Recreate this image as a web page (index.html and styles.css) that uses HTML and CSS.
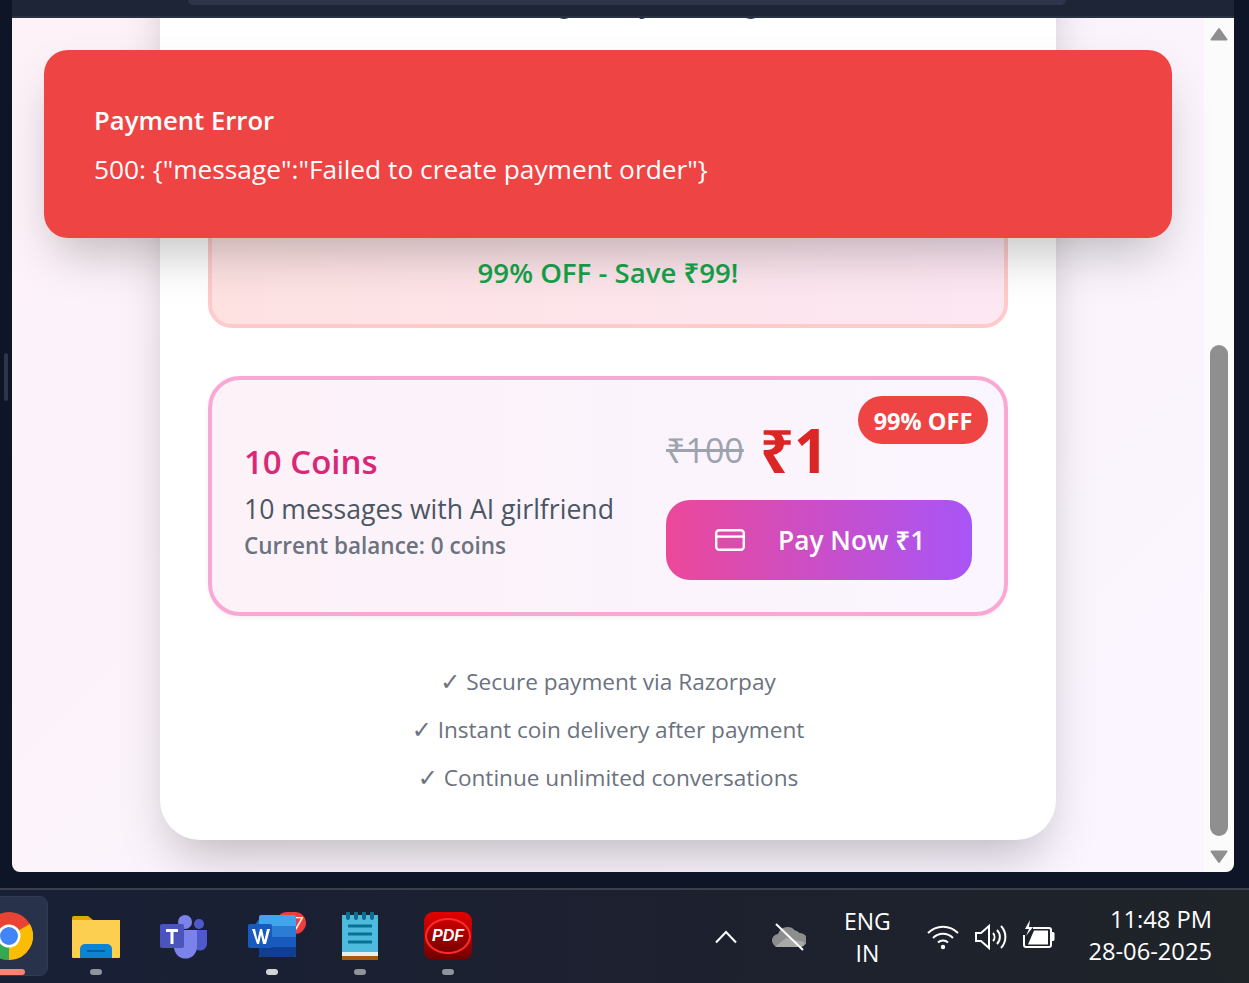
FILE: index.html
```html
<!DOCTYPE html>
<html lang="en">
<head>
<meta charset="UTF-8">
<meta name="viewport" content="width=device-width, initial-scale=1.0">
<title>Buy Coins</title>
<link rel="stylesheet" href="styles.css">
</head>
<body>
<div class="screen">
  <div class="resize-handle"></div>
  <div class="browser-bar"><div class="address-bar"></div></div>

  <div class="window">
    <main class="page">
      <section class="card">
        <h2 class="card-title">Love chatting today, darling</h2>
        <div class="offer-box">
          <p class="offer-text">99% OFF - Save ₹99!</p>
        </div>
        <div class="plan">
          <span class="plan-badge">99% OFF</span>
          <div class="plan-info">
            <h3 class="plan-name">10 Coins</h3>
            <p class="plan-desc">10 messages with AI girlfriend</p>
            <p class="plan-balance">Current balance: 0 coins</p>
          </div>
          <div class="plan-buy">
            <div class="plan-price">
              <span class="price-old">₹100</span>
              <span class="price-new">₹1</span>
            </div>
            <button class="pay-button" type="button">
              <svg class="pay-icon" viewBox="0 0 30 22" fill="none" stroke="currentColor" stroke-width="2.4">
                <rect x="1.2" y="1.2" width="27.6" height="19.6" rx="3"/>
                <path d="M1.2 7.6h27.6"/>
              </svg>
              <span>Pay Now ₹1</span>
            </button>
          </div>
        </div>
        <ul class="features">
          <li><span class="check">✓</span> Secure payment via Razorpay</li>
          <li><span class="check">✓</span> Instant coin delivery after payment</li>
          <li><span class="check">✓</span> Continue unlimited conversations</li>
        </ul>
      </section>
    </main>
    <div class="scrollbar">
      <svg class="scroll-arrow" viewBox="0 0 18 14"><path d="M9 2 L16.5 12.5 H1.5 Z" fill="#8f8f8f" stroke="#8f8f8f" stroke-width="2" stroke-linejoin="round"/></svg>
      <div class="scroll-track"><div class="scroll-thumb"></div></div>
      <svg class="scroll-arrow" viewBox="0 0 18 14"><path d="M9 12 L16.5 1.5 H1.5 Z" fill="#8f8f8f" stroke="#8f8f8f" stroke-width="2" stroke-linejoin="round"/></svg>
    </div>

    <div class="toast">
      <p class="toast-title">Payment Error</p>
      <p class="toast-text">500: {"message":"Failed to create payment order"}</p>
    </div>
  </div>

  <footer class="taskbar">
    <div class="task-apps">
      <div class="task-app task-app-active">
        <svg class="task-icon" viewBox="0 0 48 48">
          <circle cx="24" cy="24" r="24" fill="#ea4335"/>
          <path d="M24 24 L44.8 12 A24 24 0 0 1 24 48 Z" fill="#fbbc04"/>
          <path d="M24 24 L24 48 A24 24 0 0 1 3.2 12 Z" fill="#34a853"/>
          <circle cx="24" cy="24" r="11.5" fill="#fff"/>
          <circle cx="24" cy="24" r="9" fill="#4285f4"/>
        </svg>
        <span class="task-dot task-dot-alert"></span>
      </div>
      <div class="task-app">
        <svg class="task-icon" viewBox="0 0 48 48">
          <path d="M0 6a2 2 0 0 1 2-2h14l5 4v6H0z" fill="#e3a700"/>
          <path d="M0 8h48v37a1 1 0 0 1-1 1H1a1 1 0 0 1-1-1z" fill="#fdcf50"/>
          <path d="M8 46V37a5 5 0 0 1 5-5h22a5 5 0 0 1 5 5v9z" fill="#0c84d6"/>
          <path d="M15 39h18" stroke="#075c9e" stroke-width="2"/>
        </svg>
        <span class="task-dot"></span>
      </div>
      <div class="task-app">
        <svg class="task-icon" viewBox="0 0 48 48">
          <circle cx="39" cy="12" r="5" fill="#5059c9"/>
          <path d="M34 18h13v14a7 7 0 0 1-13 3z" fill="#5059c9"/>
          <circle cx="25" cy="10" r="7" fill="#7b83eb"/>
          <path d="M14 18h23v17a11 11 0 0 1-23 0z" fill="#7b83eb"/>
          <rect x="0" y="12" width="24" height="24" rx="2" fill="#4b53bc"/>
          <path d="M6 17h12v3h-4.500v12h-3V20H6z" fill="#fff"/>
        </svg>
        <span class="task-dot task-dot-hidden"></span>
      </div>
      <div class="task-app">
        <div class="word-wrap">
          <span class="word-badge">7</span>
          <svg class="task-icon word-icon" viewBox="0 0 48 48">
            <path d="M0 22 L12 6 V38 Z" fill="#1a6fc4"/>
            <rect x="11" y="3" width="37" height="42" rx="2" fill="#41a5ee"/>
            <rect x="11" y="14" width="37" height="11" fill="#2b7cd3"/>
            <rect x="11" y="25" width="37" height="10" fill="#185abd"/>
            <path d="M11 35h37v8a2 2 0 0 1-2 2H13a2 2 0 0 1-2-2z" fill="#103f91"/>
            <rect x="0" y="12" width="24" height="24" rx="2" fill="#185abd"/>
            <path d="M4 17h3l2.500 11L12 17h2l2.500 11L19 17h3l-4 15h-3l-2-9-2 9H9z" fill="#fff"/>
          </svg>
        </div>
        <span class="task-dot task-dot-open"></span>
      </div>
      <div class="task-app">
        <svg class="task-icon" viewBox="0 0 48 48">
          <rect x="6" y="3" width="36" height="37" fill="#4ebbdc"/>
          <rect x="6" y="40" width="36" height="4" fill="#e8eef0"/>
          <rect x="6" y="44" width="36" height="4" fill="#a8590f"/>
          <path d="M10 1v5M18 1v5M26 1v5M34 1v5" transform="translate(2 0)" stroke="#0c6d8c" stroke-width="4" stroke-linecap="round"/>
          <path d="M12 14h24M12 22h24M12 30h24" stroke="#0b6f93" stroke-width="3"/>
        </svg>
        <span class="task-dot"></span>
      </div>
      <div class="task-app">
        <div class="pdf-icon"><span class="pdf-ring">PDF</span></div>
        <span class="task-dot"></span>
      </div>
    </div>

    <div class="tray">
      <svg class="tray-chevron" viewBox="0 0 22 14" fill="none" stroke="#fff" stroke-width="2"><path d="M1 12.500 L11 2 L21 12.500"/></svg>
      <svg class="tray-cloud" viewBox="0 0 35 28">
        <path d="M8 24a6.500 6.500 0 0 1-1-13 10 10 0 0 1 17-3.500 7.500 7.500 0 0 1 4.500 2.500 7 7 0 0 1 1 14z" fill="#8d8d8d"/>
        <path d="M4 24 L15 15 L33 19 Q34 24 28 24z" fill="#a9a9a9"/>
        <path d="M5 1 L32 27" stroke="#fff" stroke-width="2"/>
      </svg>
      <div class="tray-lang"><span>ENG</span><span>IN</span></div>
      <div class="tray-status">
        <svg class="tray-icon" viewBox="0 0 32 26" fill="none" stroke="#fff" stroke-width="2">
          <path d="M1 9a21 21 0 0 1 30 0M6 14a14 14 0 0 1 20 0M11 18.500a7 7 0 0 1 10 0"/>
          <circle cx="16" cy="23" r="2.200" fill="#fff" stroke="none"/>
        </svg>
        <svg class="tray-icon" viewBox="0 0 32 26" fill="none" stroke="#fff" stroke-width="2">
          <path d="M1 9h5l8-7v22l-8-7H1z"/>
          <path d="M18 9a6 6 0 0 1 0 8M22 6a10 10 0 0 1 0 14M26 2a16 16 0 0 1 0 22"/>
        </svg>
        <svg class="tray-icon tray-battery" viewBox="0 0 32 28" fill="none" stroke="#fff" stroke-width="2">
          <path d="M10 8H26a2 2 0 0 1 2 2v15a2 2 0 0 1-2 2H3a2 2 0 0 1-2-2V15"/>
          <path d="M11 10.500h14v14H5z" fill="#fff" stroke="none"/>
          <path d="M28 12h2a1.500 1.500 0 0 1 1.500 1.500v6A1.500 1.500 0 0 1 30 21h-2z" fill="#fff" stroke="none"/>
          <path d="M7 0 L2 9 H6 L3 16 L10 7 H6 Z" fill="#fff" stroke="none"/>
        </svg>
      </div>
      <div class="tray-clock"><span>11:48 PM</span><span>28-06-2025</span></div>
    </div>
  </footer>
</div>
</body>
</html>
```

FILE: styles.css
```css
* {
    box-sizing: border-box;
}

html, body {
    margin: 0;
    padding: 0;
    height: 100%;
    overflow: hidden;
}

body {
    background-color: #0d1526;
    font-family: "Open Sans", "Noto Sans", sans-serif;
}

p, h2, h3, ul {
    margin: 0;
    padding: 0;
}

.screen {
    position: relative;
    height: 983px;
    display: flex;
    flex-direction: column;
}

.resize-handle {
    position: absolute;
    top: 353px;
    left: 4px;
    width: 4px;
    height: 48px;
    border-radius: 2px;
    background-color: #2e3449;
}

/* Browser bar, only the bottom edge is in view */
.browser-bar {
    position: relative;
    z-index: 1;
    height: 18px;
    background-color: #1e2536;
    border-bottom: 2px solid #2a3142;
    margin: 0 15px 0 12px;
    flex-shrink: 0;
}

.address-bar {
    height: 5px;
    margin: 0 168px 0 176px;
    background-color: #2e3449;
    border-radius: 0 0 8px 8px;
}

/* Page window */
.window {
    position: relative;
    height: 854px;
    margin: 0 15px 0 12px;
    display: flex;
    border-radius: 0 0 8px 8px;
    overflow: hidden;
    flex-shrink: 0;
}

.page {
    flex: 1;
    display: flex;
    justify-content: center;
    align-items: flex-end;
    padding-bottom: 32px;
    background: linear-gradient(135deg, #fdf2f8, #faf5ff);
}

.card {
    width: 896px;
    height: 1000px;
    flex-shrink: 0;
    display: flex;
    flex-direction: column;
    justify-content: flex-end;
    padding: 0 48px 38px;
    background-color: #fff;
    border-radius: 40px;
    box-shadow: 0 25px 50px -12px rgba(0,0,0,0.25);
}

.card-title {
    text-align: center;
    font-size: 27px;
    font-weight: 600;
    color: #374151;
    line-height: 40px;
    padding-right: 60px;
    margin-bottom: 166px;
}

.offer-box {
    height: 140px;
    display: flex;
    align-items: flex-end;
    justify-content: center;
    padding-bottom: 35px;
    border: 4px solid #fecaca;
    border-radius: 24px;
    background: linear-gradient(90deg, #fee2e2, #fce7f3);
    margin-bottom: 48px;
}

.offer-text {
    font-size: 27.6px;
    font-weight: 600;
    line-height: 34px;
    color: #16a34a;
}

.plan {
    position: relative;
    height: 240px;
    display: flex;
    justify-content: space-between;
    padding: 44px 32px 32px;
    border: 4px solid #f9a8d4;
    border-radius: 32px;
    background: linear-gradient(90deg, #fdf2f8, #faf5ff);
    box-shadow: 0 2px 5px rgba(0,0,0,0.06);
    margin-bottom: 42px;
}

.plan-badge {
    position: absolute;
    top: 16px;
    right: 16px;
    width: 130px;
    height: 48px;
    border-radius: 24px;
    background-color: #ef4444;
    color: #fff;
    font-size: 23.5px;
    font-weight: 700;
    line-height: 50px;
    text-align: center;
}

.plan-info {
    padding-top: 13px;
}

.plan-name {
    font-size: 33px;
    font-weight: 600;
    line-height: 50px;
    color: #db2777;
}

.plan-desc {
    margin-top: 1px;
    font-size: 26.6px;
    line-height: 42px;
    color: #4b5563;
}

.plan-balance {
    font-size: 22.5px;
    font-weight: 600;
    line-height: 32px;
    color: #6b7280;
}

.plan-buy {
    width: 306px;
    display: flex;
    flex-direction: column;
}

.plan-price {
    height: 52px;
    margin-bottom: 24px;
    display: flex;
    align-items: center;
    gap: 16px;
}

.price-old {
    font-size: 34px;
    color: #9ca3af;
    text-decoration: line-through;
}

.price-new {
    font-size: 60px;
    font-weight: 700;
    line-height: 52px;
    color: #dc2626;
}

.pay-button {
    height: 80px;
    display: flex;
    align-items: center;
    gap: 33px;
    padding: 0 0 0 49px;
    border: none;
    border-radius: 24px;
    background: linear-gradient(90deg, #ec4899, #a855f7);
    color: #fff;
    font-family: inherit;
    font-size: 26.3px;
    font-weight: 600;
}

.pay-icon {
    width: 30px;
    height: 22px;
}

.features {
    list-style: none;
    text-align: center;
    font-size: 22.6px;
    line-height: 48px;
    color: #6b7280;
}

.check {
    font-family: "DejaVu Sans", sans-serif;
    font-size: 24px;
    line-height: 1;
}

/* Toast over the page */
.toast {
    position: absolute;
    top: 32px;
    left: 32px;
    width: 1128px;
    height: 188px;
    padding: 47px 50px;
    border-radius: 24px;
    background-color: #ef4444;
    color: #fff;
    box-shadow: 0 25px 50px -12px rgba(0,0,0,0.25);
}

.toast-title {
    font-size: 25.7px;
    font-weight: 600;
    line-height: 48px;
}

.toast-text {
    font-size: 26.3px;
    line-height: 48px;
}

/* Scrollbar */
.scrollbar {
    width: 30px;
    flex-shrink: 0;
    display: flex;
    flex-direction: column;
    align-items: center;
    padding: 9px 0 8px;
    background-color: #fbfbfb;
}

.scroll-arrow {
    width: 18px;
    height: 14px;
    flex-shrink: 0;
}

.scroll-track {
    flex: 1;
    width: 18px;
    display: flex;
    flex-direction: column;
    justify-content: flex-end;
    padding-bottom: 14px;
}

.scroll-thumb {
    height: 491px;
    background-color: #8f8f8f;
    border-radius: 9px;
}

/* Windows taskbar */
.taskbar {
    height: 95px;
    margin-top: 16px;
    display: flex;
    justify-content: space-between;
    background: linear-gradient(90deg, #182036, #1c2030 45%, #1f2429);
    border-top: 2px solid #3b3f49;
    color: #fff;
}

.task-apps {
    display: flex;
    margin-left: -30px;
}

.task-app {
    width: 88px;
    display: flex;
    flex-direction: column;
    align-items: center;
    padding-top: 22px;
    gap: 9px;
}

.task-app-active {
    width: 78px;
    margin: 6px 4px 0 0;
    height: 80px;
    padding-top: 15px;
    background-color: #28324a;
    border: 1px solid #303a52;
    border-radius: 8px;
}

.task-icon {
    width: 48px;
    height: 48px;
    display: block;
    flex-shrink: 0;
}

.task-dot {
    width: 12px;
    height: 6px;
    border-radius: 3px;
    background-color: #8f939c;
}

.task-dot-open {
    background-color: #d2d4d8;
}

.task-dot-hidden {
    visibility: hidden;
}

.task-dot-alert {
    width: 32px;
    background-color: #f98270;
}

.word-wrap {
    position: relative;
    width: 48px;
    height: 48px;
}

.word-badge {
    position: absolute;
    top: 0;
    right: -10px;
    width: 30px;
    height: 22px;
    padding-right: 3px;
    border-radius: 11px;
    background-color: #ef3c3c;
    font-size: 18px;
    font-style: italic;
    line-height: 22px;
    text-align: right;
}

.word-icon {
    position: relative;
}

.pdf-icon {
    width: 48px;
    height: 48px;
    display: flex;
    align-items: center;
    justify-content: center;
    border-radius: 9px;
    background: linear-gradient(#e40000, #6e0000);
}

.pdf-ring {
    width: 46px;
    height: 36px;
    border: 2px solid #ff2a2a;
    border-radius: 50%;
    background: linear-gradient(#c80000, #7a0000);
    font-family: "Liberation Sans", sans-serif;
    font-size: 16px;
    font-weight: 700;
    font-style: italic;
    line-height: 32px;
    text-align: center;
}

.tray {
    display: flex;
    align-items: center;
    padding-right: 37px;
}

.tray-chevron {
    width: 22px;
    height: 14px;
    margin-right: 34px;
}

.tray-cloud {
    width: 35px;
    height: 28px;
    margin-right: 31px;
}

.tray-lang {
    width: 60px;
    display: flex;
    flex-direction: column;
    align-items: center;
    font-size: 23px;
    line-height: 32px;
    margin-right: 30px;
}

.tray-status {
    display: flex;
    align-items: center;
    gap: 16px;
    margin-right: 33px;
}

.tray-icon {
    width: 32px;
    height: 26px;
}

.tray-battery {
    height: 28px;
    margin-bottom: 5px;
}

.tray-clock {
    display: flex;
    flex-direction: column;
    align-items: flex-end;
    padding-bottom: 4px;
    font-size: 23.7px;
    line-height: 32px;
}
```
